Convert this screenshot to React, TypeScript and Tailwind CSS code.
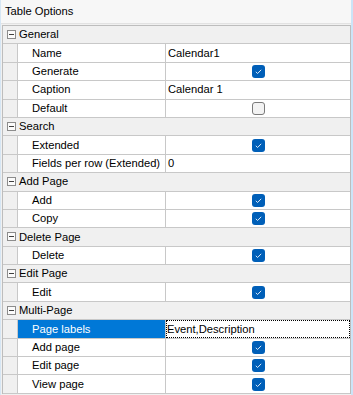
import React from "react";

type Item = {
  name: string;
  value?: string;
  check?: boolean;
  selected?: boolean;
};

type Group = {
  title: string;
  items: Item[];
};

const groups: Group[] = [
  {
    title: "General",
    items: [
      { name: "Name", value: "Calendar1" },
      { name: "Generate", check: true },
      { name: "Caption", value: "Calendar 1" },
      { name: "Default", check: false },
    ],
  },
  {
    title: "Search",
    items: [
      { name: "Extended", check: true },
      { name: "Fields per row (Extended)", value: "0" },
    ],
  },
  {
    title: "Add Page",
    items: [
      { name: "Add", check: true },
      { name: "Copy", check: true },
    ],
  },
  {
    title: "Delete Page",
    items: [{ name: "Delete", check: true }],
  },
  {
    title: "Edit Page",
    items: [{ name: "Edit", check: true }],
  },
  {
    title: "Multi-Page",
    items: [
      { name: "Page labels", value: "Event,Description", selected: true },
      { name: "Add page", check: true },
      { name: "Edit page", check: true },
      { name: "View page", check: true },
    ],
  },
];

const MinusBox = () => (
  <span className="w-[9px] h-[9px] border border-[#8c8c8c] bg-[#fbfbfb] flex items-center justify-center shrink-0">
    <span className="w-[5px] h-px bg-[#404040]" />
  </span>
);

const CheckBox = ({ checked }: { checked: boolean }) =>
  checked ? (
    <span className="w-[13px] h-[13px] rounded-[3px] bg-[#005fb8] flex items-center justify-center">
      <svg width="9" height="9" viewBox="0 0 9 9">
        <path d="M1.8 4.8 L3.6 6.5 L7.2 2.8" fill="none" stroke="#dbe9f7" strokeWidth="1" />
      </svg>
    </span>
  ) : (
    <span className="w-[13px] h-[13px] rounded-[3px] border border-[#7a7a7a] bg-[#f3f3f3]" />
  );

export default function App() {
  return (
    <div
      className="w-[353px] h-[395px] bg-[#f0f0f0] border-l border-l-[#d6e6f4] border-r-2 border-r-[#cce4f7] flex flex-col text-[11.2px] text-black overflow-hidden"
      style={{ fontFamily: '"Liberation Sans", Arial, sans-serif' }}
    >
      <div className="h-[24px] bg-[#f7f7f7] border-b border-[#e2e2e2] flex items-center pl-1 shrink-0">
        Table Options
      </div>
      <div className="h-px shrink-0" />
      <div className="ml-px w-[349px] border-l border-r border-t border-[#bdbdbd] bg-[#f0f0f0]">
        {groups.map((g) => (
          <div key={g.title}>
            <div className="h-[18.4px] flex items-center border-b border-[#c8c8c8]">
              <span className="ml-[4px]">
                <MinusBox />
              </span>
              <span className="ml-[3px]">{g.title}</span>
            </div>
            {g.items.map((it) => (
              <div key={it.name} className="h-[18.4px] flex border-b border-[#c8c8c8]">
                <div className="w-[15px] border-r border-[#c8c8c8] bg-[#f0f0f0] shrink-0" />
                <div
                  className={`w-[148px] shrink-0 border-r border-[#c8c8c8] flex items-center pl-[14px] whitespace-nowrap ${
                    it.selected ? "bg-[#0078d7] text-white" : "bg-white"
                  }`}
                >
                  {it.name}
                </div>
                <div className="flex-1 bg-white flex items-center">
                  {it.check !== undefined ? (
                    <div className="flex-1 flex justify-center">
                      <CheckBox checked={it.check} />
                    </div>
                  ) : it.selected ? (
                    <div className="flex-1 self-stretch flex items-center pl-[1px] outline-1 outline-dotted outline-black -outline-offset-1">
                      {it.value}
                    </div>
                  ) : (
                    <span className="pl-[2px]">{it.value}</span>
                  )}
                </div>
              </div>
            ))}
          </div>
        ))}
      </div>
    </div>
  );
}
